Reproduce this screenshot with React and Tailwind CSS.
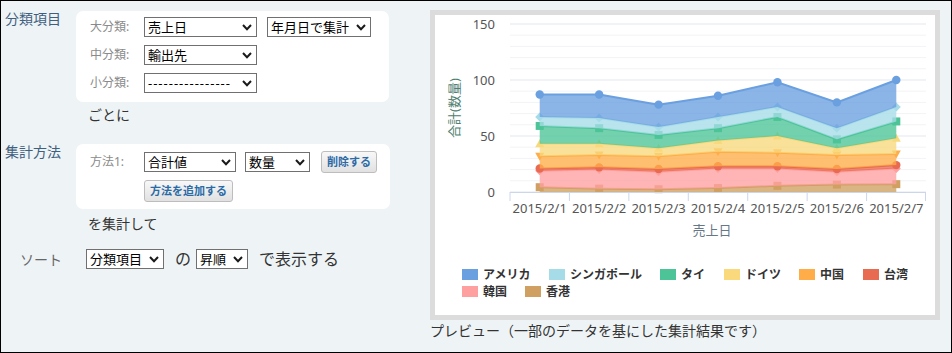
import React from "react";

const cats = ["2015/2/1", "2015/2/2", "2015/2/3", "2015/2/4", "2015/2/5", "2015/2/6", "2015/2/7"];

// cumulative (stacked) values, top series first
const series = [
  { name: "アメリカ", color: "#6a9fe0", symbol: "circle", data: [87, 87, 78, 86, 98, 80, 100] },
  { name: "シンガポール", color: "#a6dce8", symbol: "diamond", data: [67, 66, 58, 67, 76, 57, 76] },
  { name: "タイ", color: "#4cc497", symbol: "square", data: [59, 57, 51, 57, 67, 47, 63] },
  { name: "ドイツ", color: "#f9d97c", symbol: "triangle", data: [43, 43, 39, 46, 50, 39, 48] },
  { name: "中国", color: "#ffad48", symbol: "triangle-down", data: [32, 33, 32, 36, 35, 33, 34] },
  { name: "台湾", color: "#e86a50", symbol: "circle", data: [21, 22, 20.5, 23, 23, 20.5, 24] },
  { name: "韓国", color: "#ffa0a0", symbol: "diamond", data: [19, 20, 18, 21, 21, 18, 21] },
  { name: "香港", color: "#d0a062", symbol: "square", data: [4.3, 3, 2.5, 3.5, 5.5, 6.6, 7] },
];

const legendPos = [
  [27, 254], [114, 254], [225, 254], [289, 254], [364, 254], [428, 254],
  [27, 271], [90, 271],
];

const X = (i) => 75 + 59.43 * (i + 0.5);
const Y = (v) => 177 - 1.12 * v;

function Marker({ symbol, x, y, color }) {
  if (symbol === "circle") return <circle cx={x} cy={y} r={4.2} fill={color} />;
  if (symbol === "square") return <rect x={x - 4} y={y - 4} width={8} height={8} fill={color} />;
  if (symbol === "diamond")
    return <path d={`M${x} ${y - 4.5}L${x + 4.5} ${y}L${x} ${y + 4.5}L${x - 4.5} ${y}Z`} fill={color} />;
  if (symbol === "triangle")
    return <path d={`M${x} ${y - 4.5}L${x + 4.5} ${y + 3.5}L${x - 4.5} ${y + 3.5}Z`} fill={color} />;
  return <path d={`M${x} ${y + 4.5}L${x + 4.5} ${y - 3.5}L${x - 4.5} ${y - 3.5}Z`} fill={color} />;
}

function Chart() {
  const grid = [];
  for (let v = 0; v <= 150; v += 10) grid.push(v);
  const layers = series.map((s, k) => {
    const below = series[k + 1] ? series[k + 1].data : s.data.map(() => 0);
    const top = s.data.map((v, i) => `${X(i)},${Y(v)}`);
    const bot = below.map((v, i) => `${X(i)},${Y(v)}`).reverse();
    return { ...s, area: `M${top.join("L")}L${bot.join("L")}Z`, line: `M${top.join("L")}` };
  });

  return (
    <svg width="500" height="300" className="block">
      {grid.map((v) => (
        <line
          key={v}
          x1="75"
          x2="491"
          y1={Y(v)}
          y2={Y(v)}
          stroke={v % 50 === 0 ? "#e3e8ef" : "#f1f3f6"}
          strokeWidth="1"
        />
      ))}
      {[0, 50, 100, 150].map((v) => (
        <text key={v} x="60" y={Y(v) + 5} textAnchor="end" fontSize="13" fill="#555">
          {v}
        </text>
      ))}
      <text transform="translate(24 93) rotate(-90)" textAnchor="middle" fontSize="13" fill="#4e8070">
        合計(数量)
      </text>

      {[...layers].reverse().map((s) => (
        <g key={s.name}>
          <path d={s.area} fill={s.color} fillOpacity="0.78" />
          <path d={s.line} fill="none" stroke={s.color} strokeWidth="2" />
          {s.data.map((v, i) => (
            <Marker key={i} symbol={s.symbol} x={X(i)} y={Y(v)} color={s.color} />
          ))}
        </g>
      ))}

      <line x1="75" x2="491" y1="177.5" y2="177.5" stroke="#ccd6eb" />
      {cats.map((c, i) => (
        <line key={c} x1={75 + 59.43 * i} x2={75 + 59.43 * i} y1="177" y2="186" stroke="#ccd6eb" />
      ))}
      <line x1="490.5" x2="490.5" y1="177" y2="186" stroke="#ccd6eb" />
      {cats.map((c, i) => (
        <text key={c} x={X(i)} y="198" textAnchor="middle" fontSize="13" fill="#555">
          {c}
        </text>
      ))}
      <text x="277" y="220" textAnchor="middle" fontSize="13" fill="#667788">
        売上日
      </text>

      {series.map((s, k) => (
        <g key={s.name}>
          <rect x={legendPos[k][0]} y={legendPos[k][1]} width="16" height="11" fill={s.color} />
          <text
            x={legendPos[k][0] + 21}
            y={legendPos[k][1] + 10}
            fontSize="12"
            fontWeight="bold"
            fill="#333"
          >
            {s.name}
          </text>
        </g>
      ))}
    </svg>
  );
}

function Chevron() {
  return (
    <svg width="10" height="7" viewBox="0 0 10 7" className="shrink-0">
      <path d="M1 1L5 5.2L9 1" fill="none" stroke="#1a1a1a" strokeWidth="2" />
    </svg>
  );
}

function Select({ value, className, textClass = "" }) {
  return (
    <div
      className={`flex items-center justify-between gap-1 h-5 border border-[#707070] bg-white pl-[3px] pr-[4px] text-[13px] text-black ${className}`}
    >
      <span className={`leading-[18px] whitespace-nowrap ${textClass}`}>{value}</span>
      <Chevron />
    </div>
  );
}

function Btn({ children }) {
  return (
    <button className="h-[22px] px-[5px] rounded-[3px] border border-[#bdbdbd] bg-linear-to-b from-[#f8f8f8] to-[#e1e1e1] text-[11px] font-bold text-[#2a6aa6] leading-[20px]">
      {children}
    </button>
  );
}

function Label({ children }) {
  return <div className="w-[54px] text-[12px] text-[#8a8a8a] leading-5">{children}</div>;
}

export default function App() {
  return (
    <div className="w-[952px] h-[353px] border border-black bg-[#eef3f6] flex font-['Noto_Sans','Noto_Sans_CJK_JP',sans-serif] text-[#333]">
      <div className="w-[429px] pt-[10px]">
        <div className="flex">
          <div className="w-[75px] pl-[4px] text-[14px] leading-[16px] text-[#3f5f7f]">分類項目</div>
          <div className="w-[313px] rounded-[7px] bg-white pt-[6px] pb-[9px] pl-[14px] flex flex-col gap-2">
            <div className="flex items-center">
              <Label>大分類:</Label>
              <Select value="売上日" className="w-[113px]" />
              <Select value="年月日で集計" className="w-[104px] ml-[10px]" />
            </div>
            <div className="flex items-center">
              <Label>中分類:</Label>
              <Select value="輸出先" className="w-[113px]" />
            </div>
            <div className="flex items-center">
              <Label>小分類:</Label>
              <Select value="----------------" className="w-[113px]" textClass="tracking-[1px]" />
            </div>
          </div>
        </div>
        <div className="ml-[87px] mt-[3px] text-[14px] leading-5">ごとに</div>

        <div className="flex mt-[19px]">
          <div className="w-[75px] pl-[4px] text-[14px] leading-[16px] text-[#3f5f7f]">集計方法</div>
          <div className="w-[314px] rounded-[7px] bg-white pt-[7px] pb-[7px] pl-[14px] flex flex-col gap-[7px]">
            <div className="flex items-center">
              <Label>方法1:</Label>
              <Select value="合計値" className="w-[92px]" />
              <Select value="数量" className="w-[65px] ml-[9px]" />
              <div className="ml-[11px] flex">
                <Btn>削除する</Btn>
              </div>
            </div>
            <div className="flex pl-[54px]">
              <Btn>方法を追加する</Btn>
            </div>
          </div>
        </div>
        <div className="ml-[87px] mt-[5px] text-[14px] leading-5">を集計して</div>

        <div className="flex items-center mt-[15px] h-5">
          <div className="w-[85px] pl-[19px] text-[14px] text-[#666]">ソート</div>
          <Select value="分類項目" className="w-[78px]" />
          <span className="ml-[11px] mr-[5px] text-[16px] text-[#333]">の</span>
          <Select value="昇順" className="w-[52px]" />
          <span className="ml-[11px] text-[16px] text-[#333]">で表示する</span>
        </div>
      </div>

      <div className="pt-[9px]">
        <div className="w-[510px] h-[310px] border-[5px] border-[#dcdcdc] bg-white">
          <Chart />
        </div>
        <div className="mt-[1px] text-[14px] leading-5 text-[#333]">
          プレビュー（一部のデータを基にした集計結果です）
        </div>
      </div>
    </div>
  );
}
